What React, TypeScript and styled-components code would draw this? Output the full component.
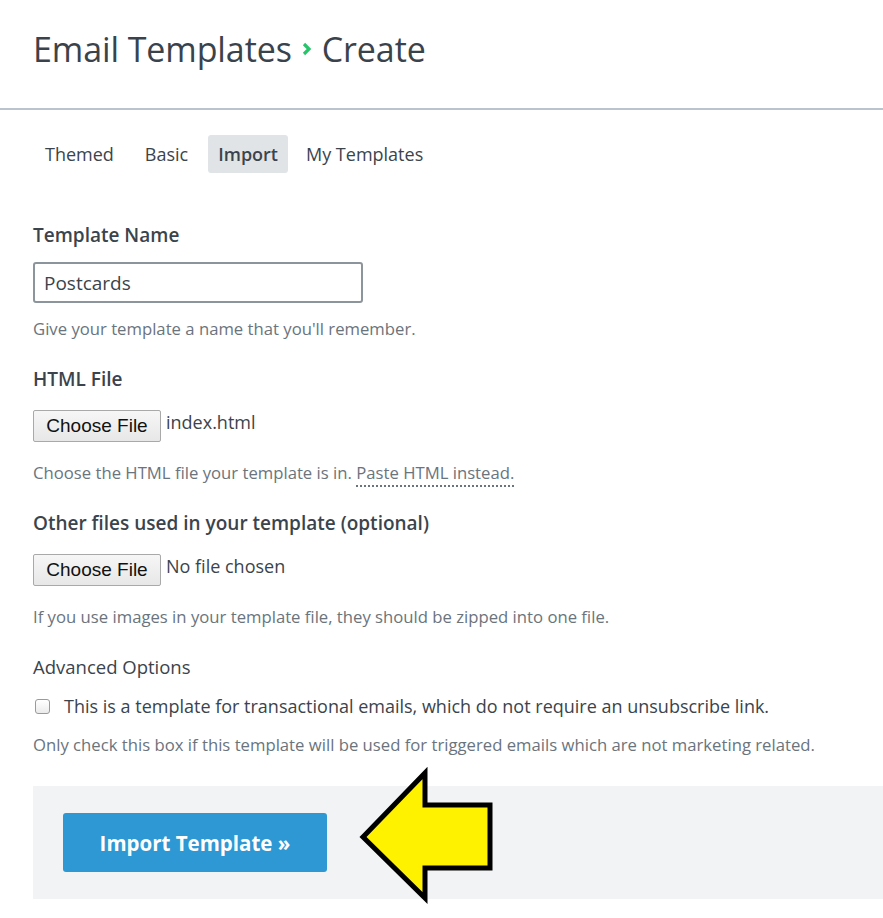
import React from "react";
import styled, { createGlobalStyle } from "styled-components";

const Global = createGlobalStyle`
  html, body { margin: 0; padding: 0; background: #fff; }
  body { font-family: "Open Sans", Lato, sans-serif; color: #3b444c; }
  * { box-sizing: border-box; }
`;

const Page = styled.div`
  width: 883px;
  height: 918px;
  position: relative;
  overflow: hidden;
`;

const Header = styled.header`
  height: 110px;
  border-bottom: 2px solid #b9c4cd;
  padding: 27px 0 0 33px;
`;

const Title = styled.h1`
  margin: 0;
  font-weight: 400;
  font-size: 34px;
  line-height: 44px;
  color: #3a434b;
  display: flex;
  align-items: center;
  gap: 10px;
  letter-spacing: -0.1px;
`;

const Content = styled.main`
  padding: 25px 0 0 34px;
`;

const Tabs = styled.nav`
  display: flex;
  margin-bottom: 50px;
`;

const Tab = styled.div<{ $active?: boolean }>`
  height: 38px;
  padding: 0 ${(p) => (p.$active ? 10 : 11)}px;
  display: flex;
  align-items: center;
  font-size: 18px;
  border-radius: 3px;
  margin-right: ${(p) => (p.$active ? 7 : 9)}px;
  color: #3b444c;
  font-weight: ${(p) => (p.$active ? 600 : 400)};
  background: ${(p) => (p.$active ? "#e1e4e7" : "transparent")};
`;

const Form = styled.div`
  margin-left: -1px;
`;

const Field = styled.section`
  margin-bottom: 28px;
`;

const Label = styled.div<{ $weight?: number }>`
  font-size: ${(p) => (p.$weight === 400 ? 18.5 : 19)}px;
  font-weight: ${(p) => p.$weight ?? 600};
  line-height: 24px;
  margin-bottom: 15px;
  color: #3b444c;
`;

const TextInput = styled.div`
  width: 330px;
  height: 41px;
  border: 2px solid #8d959c;
  border-radius: 3px;
  padding: 0 9px;
  display: flex;
  align-items: center;
  font-size: 19px;
  color: #3b444c;
`;

const Hint = styled.div<{ $gap?: number }>`
  margin-top: ${(p) => p.$gap ?? 16}px;
  font-size: 16.7px;
  line-height: 20px;
  color: #6a747d;
`;

const HintLink = styled.span`
  border-bottom: 2px dotted #6a747d;
  padding-bottom: 1px;
`;

const FileRow = styled.div`
  display: flex;
  align-items: flex-start;
  gap: 5px;
  padding-top: 4px;
`;

const FileButton = styled.div`
  width: 128px;
  height: 32px;
  border: 1px solid #a9a9a9;
  border-radius: 2px;
  background: linear-gradient(#f6f6f6, #e7e7e7);
  font-family: "Liberation Sans", Arial, sans-serif;
  font-size: 19px;
  color: #111;
  display: flex;
  align-items: center;
  justify-content: center;
`;

const FileName = styled.span`
  font-size: 18px;
  line-height: 24px;
  color: #3b444c;
`;

const CheckRow = styled.label`
  display: flex;
  align-items: center;
  gap: 14px;
  font-size: 18px;
  line-height: 24px;
  color: #3b444c;
`;

const Box = styled.span`
  width: 15px;
  height: 15px;
  margin-left: 2px;
  border: 1px solid #9a9a9a;
  border-radius: 3px;
  background: linear-gradient(#fff, #ebebeb);
`;

const Footer = styled.div`
  margin-top: 31px;
  background: #f2f3f5;
  height: 113px;
  padding: 27px 0 0 30px;
`;

const PrimaryButton = styled.div`
  width: 264px;
  height: 59px;
  background: #2d98d4;
  border-radius: 3px;
  color: #fff;
  font-size: 20.5px;
  font-weight: 700;
  display: flex;
  align-items: center;
  justify-content: center;
`;

const Arrow = styled.svg`
  position: absolute;
  left: 0;
  top: 0;
  pointer-events: none;
`;

export default function App() {
  return (
    <Page>
      <Global />
      <Header>
        <Title>
          <span>Email Templates</span>
          <svg width="10" height="14" viewBox="0 0 10 14">
            <path d="M2 2 L7 7 L2 12" stroke="#27c46b" strokeWidth="3.2" fill="none" />
          </svg>
          <span>Create</span>
        </Title>
      </Header>
      <Content>
        <Tabs>
          <Tab>Themed</Tab>
          <Tab>Basic</Tab>
          <Tab $active>Import</Tab>
          <Tab>My Templates</Tab>
        </Tabs>
        <Form>
          <Field>
            <Label>Template Name</Label>
            <TextInput>Postcards</TextInput>
            <Hint>Give your template a name that you'll remember.</Hint>
          </Field>
          <Field>
            <Label>HTML File</Label>
            <FileRow>
              <FileButton>Choose File</FileButton>
              <FileName>index.html</FileName>
            </FileRow>
            <Hint $gap={21}>
              Choose the HTML file your template is in. <HintLink>Paste HTML instead.</HintLink>
            </Hint>
          </Field>
          <Field>
            <Label>Other files used in your template (optional)</Label>
            <FileRow>
              <FileButton>Choose File</FileButton>
              <FileName>No file chosen</FileName>
            </FileRow>
            <Hint $gap={21}>If you use images in your template file, they should be zipped into one file.</Hint>
          </Field>
          <Field>
            <Label $weight={400}>Advanced Options</Label>
            <CheckRow>
              <Box />
              This is a template for transactional emails, which do not require an unsubscribe link.
            </CheckRow>
            <Hint $gap={17}>Only check this box if this template will be used for triggered emails which are not marketing related.</Hint>
          </Field>
          <Footer>
            <PrimaryButton>Import Template »</PrimaryButton>
          </Footer>
        </Form>
      </Content>
      <Arrow width="883" height="918" viewBox="0 0 883 918">
        <polygon
          points="363,837 425,773 425,805 490,805 490,868 425,868 425,898"
          fill="#fff200"
          stroke="#000"
          strokeWidth="5"
          strokeLinejoin="miter"
        />
      </Arrow>
    </Page>
  );
}
